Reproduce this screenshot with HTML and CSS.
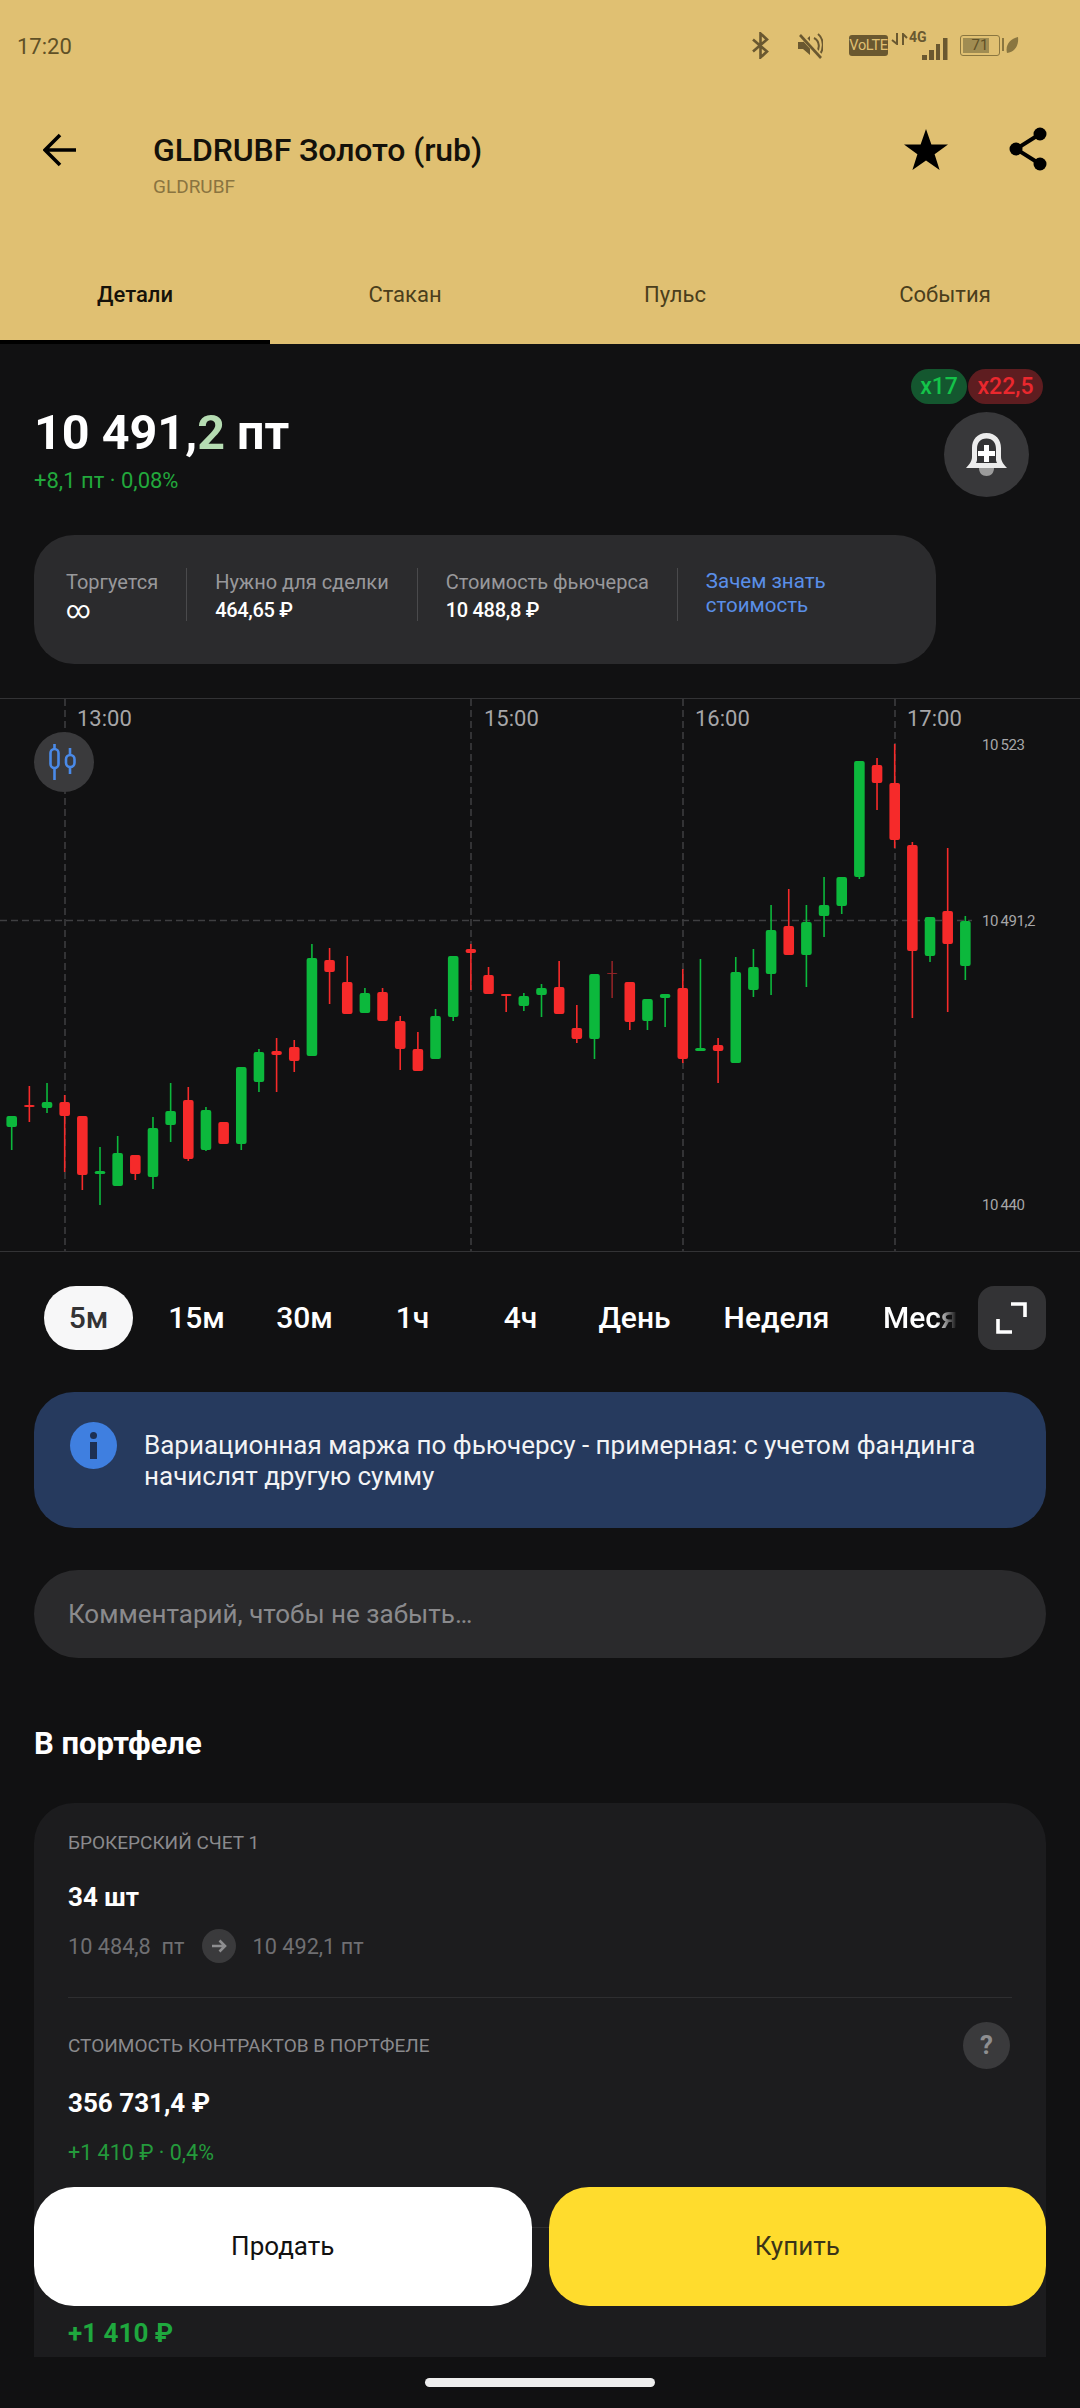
FILE: index.html
```html
<!DOCTYPE html>
<html lang="ru">
<head>
    <meta charset="UTF-8">
    <meta name="viewport" content="width=device-width, initial-scale=1.0">
    <title>GLDRUBF Золото (rub)</title>
    <link rel="stylesheet" href="styles.css">
</head>
<body>
    <div class="top">
        <div class="statusbar">
            <span class="clock">17:20</span>
            <div class="status-icons">
                <svg class="ic-bt" width="17" height="27" viewBox="0 0 17 27"><path d="M1 7.500 15 19.500 8.500 25.500V1.500L15 7.500 1 19.500" fill="none" stroke="#6a5830" stroke-width="2.600"/></svg>
                <svg class="ic-mute" width="26" height="27" viewBox="0 0 26 27"><path d="M1 10h5l7-6v19l-7-6H1z" fill="#6a5830"/><path d="M17 6c6 3 6 11 2 15M21 2c6 5 6 15 2 20" fill="none" stroke="#6a5830" stroke-width="2"/><path d="M3 2 25 26" stroke="#e0c072" stroke-width="5"/><path d="M3 3 24 26" stroke="#6a5830" stroke-width="2.600"/></svg>
                <span class="volte">VoLTE</span>
                <svg class="ic-arrows" width="17" height="12" viewBox="0 0 17 12"><path d="M6 0v11L1 7M12 12V1l4 4" fill="none" stroke="#6a5830" stroke-width="2"/></svg>
                <div class="signal">
                    <span class="net">4G</span>
                    <svg class="ic-bars" width="26" height="23" viewBox="0 0 26 23"><rect x="0" y="17" width="5" height="5" fill="#6a5830"/><rect x="7" y="12" width="5" height="10" fill="#6a5830"/><rect x="14" y="6" width="4" height="16" fill="#6a5830"/><rect x="21" y="0" width="4.500" height="22" fill="#6a5830"/></svg>
                </div>
                <div class="battery"><span class="battery-fill"></span><span class="battery-num">71</span></div>
                <svg class="ic-leaf" width="17" height="18" viewBox="0 0 17 18"><rect x="0" y="2" width="2" height="13" fill="#8a7640"/><path d="M5 17C3 9 8 3 16 1c1 8-3 15-11 16z" fill="#8a7640"/></svg>
            </div>
        </div>

        <div class="toolbar">
            <svg class="back" width="34" height="34" viewBox="0 0 34 34"><path d="M33 17H3M17 2 2 17l15 15" fill="none" stroke="#000" stroke-width="3.600"/></svg>
            <div class="title-block">
                <div class="title">GLDRUBF Золото (rub)</div>
                <div class="subtitle">GLDRUBF</div>
            </div>
            <svg class="star" width="44" height="41" viewBox="0 0 44 41"><path d="M22 0l5.400 15.400H44L30.600 25.300 35.600 41 22 31.400 8.400 41 13.400 25.300 0 15.400h16.600z" fill="#000"/></svg>
            <svg class="share" width="38" height="44" viewBox="0 0 38 44"><path d="M31 7 7 22l24 15" fill="none" stroke="#000" stroke-width="4"/><circle cx="31" cy="7" r="6.500"/><circle cx="7" cy="22" r="6.500"/><circle cx="31" cy="37" r="6.500"/></svg>
        </div>

        <div class="tabs">
            <div class="tab tab-active">Детали</div>
            <div class="tab">Стакан</div>
            <div class="tab">Пульс</div>
            <div class="tab">События</div>
        </div>
    </div>

    <div class="quote">
        <div class="quote-left">
            <div class="price">10 491,<span class="price-tick">2</span> пт</div>
            <div class="price-change">+8,1 пт · 0,08%</div>
        </div>
        <div class="quote-right">
            <div class="badges">
                <span class="badge badge-green">x17</span>
                <span class="badge badge-red">x22,5</span>
            </div>
            <div class="bell">
                <svg width="41" height="43" viewBox="0 0 41 43">
                    <path d="M13 35h15c0 5-3 8-7.500 8S13 40 13 35z" fill="#9b9b9b"/>
                    <path d="M20.500 0C11 0 6 7 6 15v9c0 4-3 8-6 11h41c-3-3-6-7-6-11v-9C35 7 30 0 20.500 0z" fill="#ececec"/>
                    <path d="M20.500 5.500C14 5.500 11 10 11 16v11c0 1-.5 2-1 3h21c-.5-1-1-2-1-3V16c0-6-3-10.500-9.500-10.500z" fill="#333335"/>
                    <path d="M18 12h5v6h6v5h-6v6h-5v-6h-6v-5h6z" fill="#fff"/>
                </svg>
            </div>
        </div>
    </div>

    <div class="facts">
        <div class="fact">
            <div class="fact-label">Торгуется</div>
            <div class="fact-value fact-inf">∞</div>
        </div>
        <div class="fact">
            <div class="fact-label">Нужно для сделки</div>
            <div class="fact-value">464,65 ₽</div>
        </div>
        <div class="fact">
            <div class="fact-label">Стоимость фьючерса</div>
            <div class="fact-value">10 488,8 ₽</div>
        </div>
        <div class="fact fact-link">Зачем знать<br>стоимость</div>
    </div>

    <div class="chart">
        <svg id="chart-svg" width="1080" height="554" viewBox="0 698 1080 554">
            <line class="axis" x1="0" y1="698.500" x2="1080" y2="698.500"/>
            <line class="axis" x1="0" y1="1251.500" x2="1080" y2="1251.500"/>
            <line class="grid" x1="65" y1="699" x2="65" y2="1251"/>
            <line class="grid" x1="471" y1="699" x2="471" y2="1251"/>
            <line class="grid" x1="683" y1="699" x2="683" y2="1251"/>
            <line class="grid" x1="895" y1="699" x2="895" y2="1251"/>
            <line class="grid" x1="0" y1="920.500" x2="972" y2="920.500"/>
            <text class="time" x="77" y="726">13:00</text>
            <text class="time" x="484" y="726">15:00</text>
            <text class="time" x="695" y="726">16:00</text>
            <text class="time" x="907" y="726">17:00</text>
            <text class="level" x="982" y="750">10 523</text>
            <text class="level" x="982" y="926">10 491,2</text>
            <text class="level" x="982" y="1210">10 440</text>
            <g id="candles"></g>
        </svg>
        <div class="chart-type">
            <svg width="30" height="38" viewBox="0 0 30 38"><g fill="none" stroke="#4a8ae8" stroke-width="2.600"><rect x="1.500" y="6" width="8" height="19" rx="4"/><path d="M5.500 1v5M5.500 25v12"/><rect x="17" y="12" width="8.500" height="12" rx="4.200"/><path d="M21 5v7M21 24v7"/></g></svg>
        </div>
    </div>

    <div class="timeframes">
        <div class="tf-strip">
            <div class="tf tf-active">5м</div>
            <div class="tf">15м</div>
            <div class="tf">30м</div>
            <div class="tf">1ч</div>
            <div class="tf">4ч</div>
            <div class="tf">День</div>
            <div class="tf">Неделя</div>
            <div class="tf tf-cut">Месяц</div>
        </div>
        <div class="expand">
            <svg width="34" height="34" viewBox="0 0 34 34"><path d="M16 3h14v13M3 18v13h14" fill="none" stroke="#fff" stroke-width="3.600"/></svg>
        </div>
    </div>

    <div class="notice">
        <div class="notice-icon"><span class="i-dot"></span><span class="i-stem"></span></div>
        <div class="notice-text">Вариационная маржа по фьючерсу - примерная: с учетом фандинга начислят другую сумму</div>
    </div>

    <div class="comment">Комментарий, чтобы не забыть…</div>

    <h2 class="section-title">В портфеле</h2>

    <div class="card">
        <div class="card-label card-first">БРОКЕРСКИЙ СЧЕТ 1</div>
        <div class="card-big card-qty">34 шт</div>
        <div class="avg-row">
            <span>10 484,8&nbsp; пт</span>
            <span class="avg-arrow"><svg width="16" height="16" viewBox="0 0 16 16"><path d="M1 8h13M8.500 2.500 14 8l-5.500 5.500" fill="none" stroke="#8e8e90" stroke-width="2.600"/></svg></span>
            <span>10 492,1 пт</span>
        </div>
        <div class="card-divider"></div>
        <div class="label-row">
            <div class="card-label">СТОИМОСТЬ КОНТРАКТОВ В ПОРТФЕЛЕ</div>
            <div class="help">?</div>
        </div>
        <div class="card-big card-sum">356 731,4 ₽</div>
        <div class="card-gain">+1 410 ₽ · 0,4%</div>
        <div class="card-divider card-divider-low"></div>
        <div class="card-big card-profit">+1 410 ₽</div>
    </div>

    <div class="trade">
        <div class="trade-btn trade-sell">Продать</div>
        <div class="trade-btn trade-buy">Купить</div>
    </div>

    <div class="home-bar"></div>

    <script src="chart.js"></script>
</body>
</html>
```

FILE: styles.css
```css
/* Base */
body {
    margin: 0;
    width: 1080px;
    height: 2408px;
    position: relative;
    overflow: hidden;
    background-color: #111112;
    color: #fff;
    font-family: Roboto, "Noto Sans", sans-serif;
}

/* Gold header */
.top {
    height: 344px;
    background-color: #e0c072;
}

.statusbar {
    height: 92px;
    display: flex;
    align-items: center;
    justify-content: space-between;
    padding: 0 61px 0 17px;
}

.clock {
    font-size: 22px;
    color: #5f5026;
}

.status-icons {
    display: flex;
    align-items: center;
    margin-top: -2px;
}

.status-icons > * {
    flex: none;
}

.ic-mute {
    margin-left: 28px;
}

.volte {
    margin-left: 26px;
    width: 39px;
    height: 21px;
    line-height: 21px;
    text-align: center;
    border-radius: 3px;
    background-color: #6a5830;
    color: #e0c072;
    font-size: 14.500px;
    letter-spacing: -0.3px;
}

.ic-arrows {
    margin: -12px 0 0 3px;
}

.signal {
    position: relative;
    width: 39px;
    height: 27px;
    margin-left: 1px;
}

.net {
    position: absolute;
    left: 0;
    top: -3px;
    font-size: 14px;
    font-weight: 700;
    line-height: 16px;
    color: #6a5830;
}

.ic-bars {
    position: absolute;
    right: 0;
    bottom: -2px;
}

.battery {
    position: relative;
    width: 40px;
    height: 21px;
    margin-left: 12px;
    box-sizing: border-box;
    border: 1.5px solid #8a7640;
    border-radius: 3px;
}

.battery-fill {
    position: absolute;
    left: 2px;
    top: 2px;
    bottom: 2px;
    width: 26px;
    background-color: #a08c52;
}

.battery-num {
    position: absolute;
    left: 0;
    right: 0;
    top: 0;
    text-align: center;
    font-size: 15px;
    line-height: 18px;
    color: #5f5026;
}

.ic-leaf {
    margin-left: 2px;
}

.toolbar {
    height: 154px;
    display: flex;
    align-items: flex-start;
    padding: 36px 33px 0 43px;
    box-sizing: border-box;
}

.back {
    margin-top: 5px;
}

.title-block {
    margin-left: 76px;
    flex: 1;
}

.title {
    font-size: 32px;
    font-weight: 500;
    line-height: 44px;
    letter-spacing: -0.1px;
    color: #14110a;
}

.subtitle {
    font-size: 19px;
    line-height: 30px;
    color: #8a7440;
}

.star {
    margin: 1px 61px 0 0;
}

.share {
    margin-top: -1px;
}

.tabs {
    height: 98px;
    display: flex;
}

.tab {
    flex: 1;
    text-align: center;
    font-size: 22px;
    line-height: 98px;
    color: #4a3e1c;
}

.tab-active {
    font-weight: 500;
    color: #15120a;
    box-shadow: inset 0 -4px 0 #000;
}

/* Price */
.quote {
    height: 191px;
    display: flex;
    justify-content: space-between;
    box-sizing: border-box;
    padding: 25px 37px 0 34px;
}

.quote-left {
    padding-top: 36px;
}

.price {
    font-size: 48.500px;
    font-weight: 700;
    line-height: 56px;
}

.price-tick {
    color: #b5dcb2;
}

.price-change {
    font-size: 22px;
    line-height: 40px;
    color: #22a83c;
}

.badges {
    display: flex;
    gap: 1px;
}

.badge {
    height: 35px;
    line-height: 35px;
    text-align: center;
    border-radius: 18px;
    font-size: 23px;
    font-weight: 500;
}

.badge-green {
    width: 56px;
    background-color: #14572f;
    color: #14c44a;
}

.badge-red {
    width: 75px;
    background-color: #5e1d20;
    color: #ea282e;
}

.bell {
    width: 85px;
    height: 85px;
    margin: 8px 0 0 33px;
    display: flex;
    align-items: center;
    justify-content: center;
    border-radius: 50%;
    background-color: #38383a;
}

/* Facts */
.facts {
    width: 902px;
    height: 129px;
    margin-left: 34px;
    box-sizing: border-box;
    padding: 33px 0 0 32px;
    display: flex;
    align-items: flex-start;
    border-radius: 40px;
    background-color: #2b2b2d;
}

.fact {
    height: 53px;
    padding: 0 28px;
    border-left: 1px solid #4a4a4c;
}

.fact:first-child {
    padding-left: 0;
    border-left: none;
}

.fact-label {
    font-size: 20px;
    line-height: 28px;
    color: #98989b;
}

.fact-value {
    font-size: 20px;
    font-weight: 500;
    line-height: 28px;
    letter-spacing: -0.3px;
}

.fact-inf {
    font-size: 24px;
    font-weight: 400;
}

.fact-link {
    padding-top: 1px;
    height: 52px;
    font-size: 20.500px;
    line-height: 24px;
    color: #5a8fe8;
}

/* Chart */
.chart {
    position: relative;
    height: 554px;
    margin-top: 34px;
}

.chart svg {
    display: block;
}

.axis {
    stroke: #333335;
    stroke-width: 1;
}

.grid {
    stroke: #3f3f41;
    stroke-width: 1.5;
    stroke-dasharray: 7 4;
}

.time {
    fill: #a6a6a8;
    font-size: 22px;
}

.level {
    fill: #a6a6a8;
    font-size: 15px;
    letter-spacing: -0.4px;
    word-spacing: -1px;
}

.chart-type {
    position: absolute;
    left: 34px;
    top: 34px;
    width: 60px;
    height: 60px;
    display: flex;
    align-items: center;
    justify-content: center;
    border-radius: 50%;
    background-color: #3a3a3c;
}

/* Timeframes */
.timeframes {
    height: 64px;
    margin-top: 34px;
    padding: 0 34px 0 44px;
    display: flex;
    justify-content: space-between;
}

.tf-strip {
    width: 912px;
    display: grid;
    grid-template-columns: 89px 89px 89px 89px 89px 101px 145px 89px;
    column-gap: 19px;
    overflow: hidden;
}

.tf {
    text-align: center;
    font-size: 30px;
    font-weight: 500;
    line-height: 64px;
    border-radius: 32px;
    white-space: nowrap;
}

.tf-active {
    background-color: #f7f7f8;
    color: #333335;
}

.tf-cut {
    text-align: left;
    padding-left: 15px;
    -webkit-mask-image: linear-gradient(to right, #000 68px, transparent 89px);
    mask-image: linear-gradient(to right, #000 68px, transparent 89px);
}

.expand {
    width: 68px;
    height: 64px;
    display: flex;
    align-items: center;
    justify-content: center;
    border-radius: 16px;
    background-color: #333335;
}

/* Notice */
.notice {
    height: 136px;
    margin: 42px 34px 0;
    box-sizing: border-box;
    padding: 30px 36px 0;
    display: flex;
    gap: 27px;
    border-radius: 40px;
    background-color: #263a5e;
}

.notice-icon {
    position: relative;
    flex: none;
    width: 47px;
    height: 47px;
    border-radius: 50%;
    background-color: #3f7fe0;
}

.i-dot {
    position: absolute;
    left: 20px;
    top: 10px;
    width: 7px;
    height: 7px;
    border-radius: 50%;
    background-color: #1d2f52;
}

.i-stem {
    position: absolute;
    left: 20px;
    top: 20px;
    width: 7px;
    height: 17px;
    background-color: #1d2f52;
}

.notice-text {
    margin-top: 8px;
    font-size: 26px;
    line-height: 31px;
    color: #f2f3f5;
}

/* Comment */
.comment {
    height: 88px;
    margin: 42px 34px 0;
    padding-left: 34px;
    border-radius: 44px;
    background-color: #2a2a2c;
    font-size: 26px;
    line-height: 88px;
    color: #8a8a8d;
}

.section-title {
    margin: 66px 0 39px 34px;
    font-size: 31px;
    font-weight: 700;
    line-height: 40px;
}

/* Portfolio card */
.card {
    height: 554px;
    margin: 0 34px;
    box-sizing: border-box;
    padding: 26px 34px 0;
    overflow: hidden;
    border-radius: 40px 40px 0 0;
    background-color: #1c1c1e;
}

.card-label {
    font-size: 19px;
    line-height: 28px;
    color: #8a8a8d;
}

.card-big {
    font-size: 26px;
    font-weight: 700;
    line-height: 36px;
}

.card-qty {
    margin-top: 22px;
}

.avg-row {
    height: 34px;
    margin-top: 14px;
    display: flex;
    align-items: center;
    gap: 17px;
    font-size: 21.700px;
    color: #6f6f72;
}

.avg-arrow {
    width: 34px;
    height: 34px;
    display: flex;
    align-items: center;
    justify-content: center;
    border-radius: 50%;
    background-color: #3a3a3c;
}

.card-divider {
    height: 1px;
    margin-top: 34px;
    background-color: #2e2e30;
}

.card-divider-low {
    margin-top: 59px;
}

.label-row {
    margin-top: 24px;
    display: flex;
    align-items: center;
    justify-content: space-between;
}

.help {
    width: 47px;
    height: 47px;
    margin-right: 2px;
    line-height: 47px;
    text-align: center;
    border-radius: 50%;
    background-color: #3a3a3c;
    color: #8e8e90;
    font-size: 26px;
    font-weight: 700;
}

.card-sum {
    margin-top: 16px;
}

.card-gain {
    margin-top: 17px;
    font-size: 21.500px;
    line-height: 30px;
    color: #249a3c;
}

.card-profit {
    margin-top: 87px;
    color: #1fa83e;
}

/* Buy / sell buttons over the card */
.trade {
    position: absolute;
    left: 34px;
    right: 34px;
    top: 2187px;
    display: flex;
    gap: 17px;
}

.trade-btn {
    flex: 1;
    height: 119px;
    line-height: 119px;
    text-align: center;
    border-radius: 40px;
    font-size: 26px;
}

.trade-sell {
    background-color: #fff;
    color: #111;
}

.trade-buy {
    background-color: #ffdc2d;
    color: #3b3418;
}

.home-bar {
    width: 230px;
    height: 9px;
    margin: 21px auto 0;
    border-radius: 5px;
    background-color: #eeeeee;
}
```

FILE: chart.js
```js
// Candles read as: colour, wick top, body top, body bottom, wick bottom (page y)
var candles = [
    ['g', 1116, 1116, 1127, 1150],
    ['r', 1086, 1105, 1107, 1122],
    ['g', 1083, 1102, 1108, 1113],
    ['r', 1095, 1102, 1116, 1172],
    ['r', 1116, 1116, 1175, 1190],
    ['g', 1147, 1171, 1174, 1205],
    ['g', 1136, 1153, 1186, 1186],
    ['r', 1155, 1155, 1174, 1180],
    ['g', 1117, 1128, 1177, 1189],
    ['g', 1083, 1111, 1125, 1142],
    ['r', 1087, 1100, 1159, 1161],
    ['g', 1107, 1110, 1150, 1151],
    ['r', 1122, 1122, 1144, 1144],
    ['g', 1067, 1067, 1144, 1150],
    ['g', 1049, 1052, 1082, 1092],
    ['r', 1038, 1051, 1055, 1092],
    ['r', 1040, 1047, 1061, 1072],
    ['g', 944, 958, 1056, 1056],
    ['r', 948, 960, 972, 1004],
    ['r', 956, 982, 1014, 1014],
    ['g', 988, 993, 1013, 1013],
    ['r', 988, 992, 1021, 1021],
    ['r', 1016, 1021, 1049, 1070],
    ['r', 1032, 1049, 1071, 1071],
    ['g', 1009, 1016, 1059, 1059],
    ['g', 956, 956, 1017, 1021],
    ['r', 944, 949, 953, 990],
    ['r', 967, 975, 994, 994],
    ['r', 994, 994, 996, 1012],
    ['g', 993, 996, 1006, 1011],
    ['g', 984, 988, 995, 1017],
    ['r', 961, 987, 1014, 1014],
    ['r', 1005, 1028, 1039, 1043],
    ['g', 974, 974, 1039, 1059],
    ['d', 961, 973, 974, 998],
    ['r', 982, 982, 1022, 1030],
    ['g', 999, 999, 1021, 1030],
    ['g', 994, 994, 998, 1027],
    ['r', 969, 988, 1059, 1063],
    ['g', 959, 1048, 1051, 1051],
    ['r', 1038, 1045, 1051, 1083],
    ['g', 957, 972, 1063, 1063],
    ['g', 949, 967, 990, 997],
    ['g', 905, 930, 974, 995],
    ['r', 889, 926, 955, 955],
    ['g', 905, 922, 955, 987],
    ['g', 877, 905, 916, 937],
    ['g', 877, 877, 906, 914],
    ['g', 761, 761, 877, 879],
    ['r', 758, 765, 783, 810],
    ['r', 744, 783, 840, 848],
    ['r', 842, 845, 951, 1018],
    ['g', 917, 917, 956, 962],
    ['r', 848, 911, 944, 1012],
    ['g', 916, 921, 966, 980]
];

var colors = { g: '#0cb83c', r: '#f62a2a', d: '#8f2326' };
var group = document.getElementById('candles');

function addRect(x, y, w, h, rx, fill) {
    var rect = document.createElementNS('http://www.w3.org/2000/svg', 'rect');
    rect.setAttribute('x', x);
    rect.setAttribute('y', y);
    rect.setAttribute('width', w);
    rect.setAttribute('height', h);
    rect.setAttribute('rx', rx);
    rect.setAttribute('fill', fill);
    group.appendChild(rect);
}

candles.forEach(function (c, i) {
    var center = 11.7 + 17.66 * i;
    var fill = colors[c[0]];
    addRect(center - 0.8, c[1], 1.6, c[4] - c[1], 0, fill);
    addRect(center - 5.3, c[2], 10.6, c[3] - c[2], 2, fill);
});
```
